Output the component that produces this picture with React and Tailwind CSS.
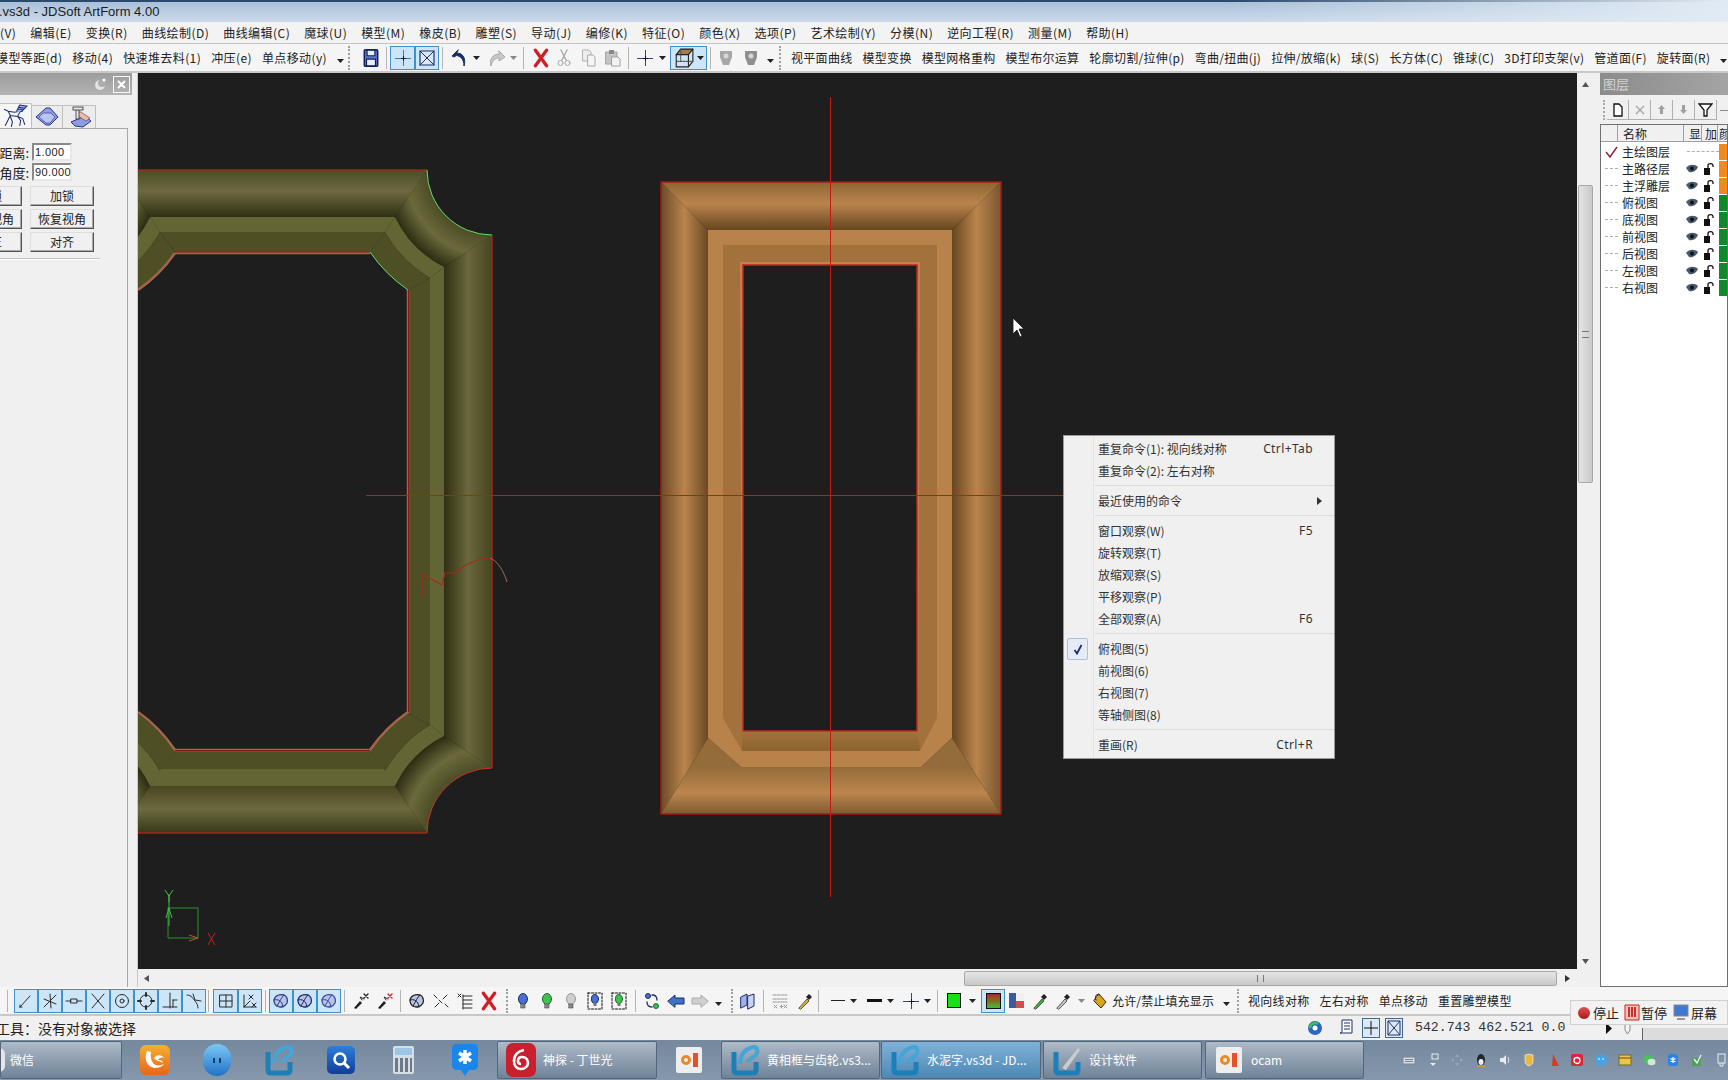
import React from "react";

const Ico = ({ s = 18, children }) => (
  <svg width={s} height={s} viewBox="0 0 18 18" fill="none" strokeLinecap="round" strokeLinejoin="round">
    {children}
  </svg>
);

const Cell = ({ className = "", children }) => (
  <div className={`flex h-full shrink-0 items-center justify-center ${className}`}>{children}</div>
);

const Sep = ({ className = "" }) => <div className={`h-[22px] w-px shrink-0 bg-[#b4b4b4] ${className}`} />;

const Grip = ({ className = "" }) => (
  <div className={`h-[24px] w-[3px] shrink-0 border-l-2 border-dotted border-[#a0a0a0] ${className}`} />
);

const Chev = ({ c = "#222" }) => (
  <svg width="7" height="4" viewBox="0 0 7 4">
    <path d="M0 0h7L3.5 4z" fill={c} />
  </svg>
);

const Low = () => (
  <svg width="7" height="10" viewBox="0 0 7 10">
    <path d="M0 6h7L3.5 10z" fill="#222" />
  </svg>
);

const HiBtn = ({ className = "w-[24px]", children }) => (
  <div className={`flex h-[24px] shrink-0 items-center justify-center border border-[#3e92c9] bg-[#cde6f7] ${className}`}>
    {children}
  </div>
);

// toolbar drawings
const Save = () => (
  <Ico s={20}>
    <rect x="3" y="1.5" width="12" height="15" rx="1" fill="#5b78c8" stroke="#14215e" strokeWidth="1.4" />
    <rect x="5.5" y="2" width="7" height="5" fill="#e9eefc" stroke="#14215e" />
    <rect x="5" y="10" width="8" height="6" fill="#e9eefc" stroke="#14215e" />
  </Ico>
);
const Cross = ({ c = "#3f62ac" }) => (
  <svg width="18" height="18" viewBox="0 0 18 18" fill="none">
    <path d="M9.500 1v16M1 9.500h16" stroke={c} strokeWidth=".9" />
    <path d="M7 9.500h5M9.500 7v5" stroke="#111" strokeWidth=".9" />
  </svg>
);
const BoxX = ({ c = "#1f2f6e" }) => (
  <Ico>
    <rect x="2" y="2" width="14" height="14" fill="#dbe9f7" stroke={c} strokeWidth="1.2" />
    <path d="M2 2l14 14M16 2L2 16" stroke={c} />
  </Ico>
);
const Undo = () => (
  <Ico>
    <path d="M7 1L1 7l2 1 2.5-1.500C9 7 13 10 13 17c2-6 0-13-7-13z" fill="#1b2f66" stroke="#1b2f66" />
  </Ico>
);
const Redo = () => (
  <Ico>
    <path d="M11 2l6 6-6 4V9C7 9 4 12 3 17 1 10 5 5 11 5z" fill="#c7c7c7" stroke="#a9a9a9" />
  </Ico>
);
const RedX = ({ s = 20 }) => (
  <Ico s={s}>
    <path d="M4 2l10 14M14 2L4 16" stroke="#cf2027" strokeWidth="3" />
  </Ico>
);
const Scissor = () => (
  <Ico>
    <path d="M6 1l5 10M12 1L7 11" stroke="#a8a8a8" strokeWidth="1.4" />
    <circle cx="5.500" cy="14" r="2.500" stroke="#a8a8a8" />
    <circle cx="12.500" cy="14" r="2.500" stroke="#a8a8a8" />
  </Ico>
);
const Copy = () => (
  <Ico>
    <path d="M3 1h6l2 2v9H3z" fill="#eee" stroke="#b0b0b0" />
    <path d="M8 6h5l2 2v9H8z" fill="#f5f5f5" stroke="#aaa" />
  </Ico>
);
const Paste = () => (
  <Ico>
    <rect x="2" y="3" width="11" height="12" fill="#c5c5c5" stroke="#a0a0a0" />
    <rect x="5" y="1" width="5" height="4" fill="#888" />
    <path d="M8 8h6l2 2v7H8z" fill="#f4f4f4" stroke="#a0a0a0" />
  </Ico>
);
const Cube = () => (
  <Ico s={20}>
    <path d="M6 1h11L13 6H2z" fill="#a8794c" stroke="#222" />
    <path d="M2 6v11h11V6M13 17l4-5V1" stroke="#222" />
    <path d="M6 1v11H2m4 0h11" stroke="#555" strokeDasharray="1.500 1" />
  </Ico>
);
const Shield = ({ c = "#a7a7a7" }) => (
  <Ico>
    <path d="M3 2h12v6l-3 8H6L3 8z" fill={c} />
    <circle cx="9" cy="7" r="2.500" fill="#d6d6d6" />
  </Ico>
);
const Snap = ({ d }) => (
  <Ico>
    <path d={d} stroke="#2a2a2a" strokeWidth="1" />
  </Ico>
);
const Ring = ({ inner }) => (
  <Ico>
    <circle cx="9" cy="9" r={inner ? 6.5 : 6} stroke="#2a2a2a" />
    {inner ? <circle cx="9" cy="9" r="2" stroke="#2a2a2a" /> : null}
    {!inner ? (
      <path d="M9 1v3M9 14v3M1 9h3M14 9h3" stroke="#2a2a2a" strokeWidth="2" />
    ) : null}
  </Ico>
);
const View = ({ c = "#2c3f8f" }) => (
  <Ico>
    <path d="M2 8C3 3 8 2 12 3C15 4 16 8 15 11C13 15 8 16 5 14C3 13 2 10 2 8z" fill="#b9c4e4" stroke={c} strokeWidth="1.300" />
    <path d="M2 8c4-1 8 0 9 7M12 3C9 6 8 9 5 14" stroke={c} />
  </Ico>
);
const Tool = ({ red }) => (
  <Ico>
    <path d="M2 16l6-7 2 2-6 6z" fill="#222" />
    <path d="M10 8l-2-3 4 2" stroke="#222" />
    <path d="M12 2l4 4M16 2l-4 4" stroke={red ? "#cf2027" : "#222"} strokeWidth="1.300" />
  </Ico>
);
const Bulb = ({ c, o }) => (
  <Ico>
    <ellipse cx="9" cy="7" rx="4.500" ry="5.500" fill={c} stroke={o} />
    <rect x="7" y="12" width="4" height="4" fill="#8a8a8a" stroke="#444" strokeWidth=".6" />
  </Ico>
);
const BulbBox = ({ c, o }) => (
  <Ico>
    <rect x="2" y="1" width="14" height="16" stroke="#111" strokeDasharray="2 1.500" />
    <ellipse cx="9" cy="7" rx="3.500" ry="4.500" fill={c} stroke={o} />
    <rect x="7.500" y="11" width="3" height="3" fill="#777" />
  </Ico>
);
const BlockArrow = ({ left }) => (
  <Ico>
    {left ? (
      <path d="M1 9l7-6v3h9v6H8v3z" fill="#3f72c4" stroke="#1b2f66" />
    ) : (
      <path d="M17 9l-7-6v3H1v6h9v3z" fill="#cfcfcf" stroke="#aaa" />
    )}
  </Ico>
);
const Dropper = ({ c = "#d9b23a" }) => (
  <Ico>
    <path d="M3 16l8-9 2 2-8 8z" fill={c} stroke="#333" strokeWidth=".8" />
    <path d="M10 5l3-3 3 3-3 3z" fill="#222" />
  </Ico>
);

const TitleBar = () => (
  <div className="relative h-[22px] shrink-0 overflow-hidden bg-gradient-to-b from-[#a5bdd8] to-[#cbdaea]">
    <div className="absolute inset-x-0 top-0 h-[2px] bg-[#2b4a6b]" />
    <div className="absolute inset-y-0 right-0 w-[500px] bg-gradient-to-r from-transparent to-[#e2ebf4]" />
    <div className="relative -ml-[40px] flex h-full items-center pt-[1px] text-[13px] text-[#1c1c1c] [font-family:'Liberation_Sans','Noto_Sans_CJK_SC',sans-serif]">
      水泥字.vs3d - JDSoft ArtForm 4.00
    </div>
  </div>
);

const menus = ["视图(V)", "编辑(E)", "变换(R)", "曲线绘制(D)", "曲线编辑(C)", "魔球(U)", "模型(M)", "橡皮(B)", "雕塑(S)", "导动(J)", "编修(K)", "特征(O)", "颜色(X)", "选项(P)", "艺术绘制(Y)", "分模(N)", "逆向工程(R)", "测量(M)", "帮助(H)"];

const MenuBar = () => (
  <div className="flex h-[22px] shrink-0 items-center gap-[14px] overflow-hidden border-b border-[#c4c4c4] bg-[#f3f3f3] pt-[1px] text-[12px] tracking-[0.45px] text-[#222]">
    <div className="-ml-[25px] shrink-0">{menus[0]}</div>
    {menus.slice(1).map((m) => (
      <div key={m} className="shrink-0">{m}</div>
    ))}
  </div>
);

const TopToolbar = () => (
  <div className="flex h-[29px] shrink-0 items-center overflow-hidden border-b-2 border-[#c8c8c8] bg-[#f5f5f5] text-[12px] tracking-[0.4px] text-[#222]">
    <div className="flex h-full w-[348px] shrink-0 items-center gap-[10px]">
      <span className="-ml-[4px] shrink-0">模型等距(d)</span>
      <span className="shrink-0">移动(4)</span>
      <span className="shrink-0">快速堆去料(1)</span>
      <span className="shrink-0">冲压(e)</span>
      <span className="shrink-0">单点移动(y)</span>
      <Low />
    </div>
    <Grip />
    <Cell className="ml-[9px] w-[22px]"><Save /></Cell>
    <Sep className="ml-[4px]" />
    <HiBtn className="ml-[3px] w-[25px]"><Cross /></HiBtn>
    <HiBtn className="w-[24px]"><BoxX /></HiBtn>
    <Sep className="ml-[3px]" />
    <Cell className="ml-[7px] w-[20px]"><Undo /></Cell>
    <Cell className="w-[12px]"><Chev /></Cell>
    <Cell className="ml-[5px] w-[20px]"><Redo /></Cell>
    <Cell className="w-[12px]"><Chev c="#888" /></Cell>
    <Sep className="ml-[4px]" />
    <Cell className="ml-[7px] w-[20px]"><RedX /></Cell>
    <Cell className="ml-[3px] w-[20px]"><Scissor /></Cell>
    <Cell className="ml-[5px] w-[20px]"><Copy /></Cell>
    <Cell className="ml-[4px] w-[20px]"><Paste /></Cell>
    <Sep className="ml-[5px]" />
    <Cell className="ml-[6px] w-[20px]"><Cross c="#2a2a6a" /></Cell>
    <Cell className="ml-[1px] w-[12px]"><Chev /></Cell>
    <HiBtn className="ml-[2px] w-[37px] gap-[3px]"><Cube /><Chev /></HiBtn>
    <Sep className="ml-[3px]" />
    <Cell className="ml-[5px] w-[20px]"><Shield /></Cell>
    <Cell className="ml-[5px] w-[20px]"><Shield c="#8f8f8f" /></Cell>
    <Cell className="ml-[3px] w-[12px]"><Low /></Cell>
    <Grip className="ml-[3px]" />
    <div className="ml-[9px] flex shrink-0 items-center gap-[10px] tracking-[0.3px]">
      {["视平面曲线", "模型变换", "模型网格重构", "模型布尔运算", "轮廓切割/拉伸(p)", "弯曲/扭曲(j)", "拉伸/放缩(k)", "球(S)", "长方体(C)", "锥球(C)", "3D打印支架(v)", "管道面(F)", "旋转面(R)"].map((t) => (
        <span key={t} className="shrink-0">{t}</span>
      ))}
      <Low />
    </div>
  </div>
);

const PanelBtn = ({ className = "", children }) => (
  <div className={`flex h-[20px] w-[64px] shrink-0 items-center justify-center border border-[#dedede] border-r-[#555] border-b-[#555] bg-[#f0f0f0] text-[12px] text-[#222] shadow-[inset_-1px_-1px_0_#a8a8a8] ${className}`}>
    {children}
  </div>
);

const NumField = ({ label, value }) => (
  <div className="flex h-[18px] items-center">
    <span className="-ml-[8px] w-[37px] shrink-0 text-right text-[13px] leading-none">{label}</span>
    <div className="ml-[3px] flex h-[18px] w-[40px] items-center border-2 border-[#8a8a8a] border-r-[#e8e8e8] border-b-[#e8e8e8] bg-white pl-[1px] text-[11px] tracking-[0.4px] text-[#222] [font-family:'Liberation_Sans',sans-serif]">
      {value}
    </div>
  </div>
);

const LeftPanel = () => (
  <div className="flex w-[138px] shrink-0 flex-col overflow-hidden border-r border-[#c8c8c8] bg-[#f0f0f0] text-[#222]">
    <div className="flex h-[22px] w-[132px] shrink-0 items-center justify-end gap-[6px] bg-gradient-to-b from-[#9c9c9c] to-[#b4b4b4] pr-[2px]">
      <svg width="14" height="14" viewBox="0 0 14 14">
        <circle cx="7" cy="8" r="5" fill="#e4e4e4" />
        <circle cx="9" cy="6" r="4" fill="#adadad" />
        <circle cx="11" cy="3" r="1.500" fill="#fff" />
      </svg>
      <div className="flex h-[17px] w-[17px] items-center justify-center border border-white/90 text-white">
        <svg width="9" height="9" viewBox="0 0 9 9">
          <path d="M1 1l7 7M8 1L1 8" stroke="#fff" strokeWidth="2" />
        </svg>
      </div>
    </div>
    <div className="mt-[10px] flex h-[23px] shrink-0 items-end">
      <div className="-ml-[1px] flex h-[25px] w-[33px] items-center justify-center rounded-t-[2px] border-x border-t border-[#c0c0c0] bg-[#f6f6f6]">
        <svg width="27" height="25" viewBox="0 0 26 24" fill="none" stroke="#1d2d78" strokeWidth="1">
          <path d="M2 5l4 2 6 1 5-1 3 0M6 7l2 4 7 1 2-4M8 11l-3 6-2 4M8 12l2 5-1 5M15 12l3 4-1 5M15 12l5 2 2 6" />
          <path d="M14 7l3-6 7 1-4 4-3 2" fill="#a9bcf0" />
          <path d="M16 3l6 1M15 5l5 0" />
        </svg>
      </div>
      <div className="flex h-[23px] w-[31px] items-center justify-center border-r border-t border-[#c0c0c0] bg-[#ececec]">
        <svg width="24" height="20" viewBox="0 0 24 20">
          <path d="M1 10L11 1h4l8 9-8 8h-4z" fill="#8d9de0" stroke="#2a3488" />
          <path d="M8 6h8l4 4-5 6h-4L4 10z" fill="#b9c4f0" stroke="#2a3488" strokeWidth=".6" />
        </svg>
      </div>
      <div className="flex h-[23px] w-[33px] items-center justify-center border-r border-t border-[#c0c0c0] bg-[#ececec] pl-[3px]">
        <svg width="24" height="22" viewBox="0 0 24 22">
          <path d="M2 16l14-6 6 5-8 6-8-1z" fill="#8d9de0" stroke="#2a3488" />
          <path d="M9 6h3l9 6-4 3-8-5z" fill="#ecb8ac" stroke="#444" strokeWidth=".6" />
          <rect x="7" y="2" width="3" height="11" fill="#e4e4e4" stroke="#333" strokeWidth=".8" />
          <rect x="4" y="1" width="10" height="3" fill="#e4e4e4" stroke="#333" strokeWidth=".8" />
        </svg>
      </div>
    </div>
    <div className="mr-[9px] flex flex-1 flex-col border-r border-t border-[#a8a8a8] bg-[#f0f0f0] pt-[14px]">
      <div className="flex flex-col gap-[2px]">
        <NumField label="距离:" value="1.000" />
        <NumField label="角度:" value="90.000" />
      </div>
      <div className="mt-[5px] flex flex-col gap-[3px]">
        <div className="-ml-[42px] flex gap-[8px]"><PanelBtn>解锁</PanelBtn><PanelBtn>加锁</PanelBtn></div>
        <div className="-ml-[42px] flex gap-[8px]"><PanelBtn>设置视角</PanelBtn><PanelBtn>恢复视角</PanelBtn></div>
        <div className="-ml-[42px] flex gap-[8px]"><PanelBtn>摆正</PanelBtn><PanelBtn>对齐</PanelBtn></div>
      </div>
      <div className="mt-[6px] h-[2px] w-[100px] border-y border-t-[#c4c4c4] border-b-white" />
    </div>
  </div>
);

const Frames = () => (
  <svg className="absolute inset-0" width="1439" height="896" viewBox="138 73 1439 896" fill="none">
    <defs>
      <linearGradient id="oTop" gradientUnits="userSpaceOnUse" x1="0" y1="170" x2="0" y2="217">
        <stop offset="0" stopColor="#4c4c26" />
        <stop offset=".45" stopColor="#6c6a3e" />
        <stop offset="1" stopColor="#2f2f14" />
      </linearGradient>
      <linearGradient id="oBot" gradientUnits="userSpaceOnUse" x1="0" y1="785" x2="0" y2="833">
        <stop offset="0" stopColor="#45451f" />
        <stop offset=".5" stopColor="#6c6a3e" />
        <stop offset="1" stopColor="#38381a" />
      </linearGradient>
      <linearGradient id="oRight" gradientUnits="userSpaceOnUse" x1="444" y1="0" x2="492" y2="0">
        <stop offset="0" stopColor="#2f2f14" />
        <stop offset=".5" stopColor="#6a683c" />
        <stop offset="1" stopColor="#45451f" />
      </linearGradient>
      <radialGradient id="oCorner" gradientUnits="userSpaceOnUse" cx="492" cy="170" r="108">
        <stop offset=".6" stopColor="#4c4c26" />
        <stop offset=".8" stopColor="#6b6a3c" />
        <stop offset="1" stopColor="#2c2c12" />
      </radialGradient>
      <linearGradient id="wTop" gradientUnits="userSpaceOnUse" x1="0" y1="182" x2="0" y2="230">
        <stop offset="0" stopColor="#8d6533" />
        <stop offset=".45" stopColor="#ba844c" />
        <stop offset="1" stopColor="#664620" />
      </linearGradient>
      <linearGradient id="wBot" gradientUnits="userSpaceOnUse" x1="0" y1="767" x2="0" y2="814">
        <stop offset="0" stopColor="#946c3a" />
        <stop offset=".55" stopColor="#bc864e" />
        <stop offset="1" stopColor="#7d5a30" />
      </linearGradient>
      <linearGradient id="wLeft" gradientUnits="userSpaceOnUse" x1="661" y1="0" x2="708" y2="0">
        <stop offset="0" stopColor="#6b4c26" />
        <stop offset=".5" stopColor="#ba844c" />
        <stop offset="1" stopColor="#6a4a24" />
      </linearGradient>
      <linearGradient id="wRight" gradientUnits="userSpaceOnUse" x1="952" y1="0" x2="1001" y2="0">
        <stop offset="0" stopColor="#664620" />
        <stop offset=".5" stopColor="#ba844c" />
        <stop offset="1" stopColor="#7a5630" />
      </linearGradient>
      <linearGradient id="wIn" gradientUnits="userSpaceOnUse" x1="0" y1="732" x2="0" y2="751">
        <stop offset="0" stopColor="#a3723c" />
        <stop offset="1" stopColor="#8b6330" />
      </linearGradient>
      <g id="oliveCorner">
        <path d="M427 170A65 65 0 0 0 492 235L444 267A108 108 0 0 1 395 217Z" fill="url(#oCorner)" />
        <path d="M395 217A108 108 0 0 0 444 267L430 278A124 124 0 0 1 385 232Z" fill="#646535" />
        <path d="M385 232A124 124 0 0 0 430 278L408 290A147 147 0 0 1 370 252Z" fill="#4f4f26" />
      </g>
    </defs>

    {/* olive frame, cut by the panel on its left */}
    <path d="M427 170L395 217H150L118 170Z" fill="url(#oTop)" />
    <path d="M395 217L385 232H160L150 217Z" fill="#646535" />
    <path d="M385 232L370 252H175L160 232Z" fill="#4f4f26" />
    <path d="M492 235L444 267V736L492 768Z" fill="url(#oRight)" />
    <path d="M444 267L430 278V725L444 736Z" fill="#646535" />
    <path d="M430 278L408 290V713L430 725Z" fill="#4f4f26" />
    <path d="M427 833L395 786H150L118 833Z" fill="url(#oBot)" />
    <path d="M395 786L385 769H160L150 786Z" fill="#646535" />
    <path d="M385 769L370 751H175L160 769Z" fill="#4f4f26" />
    <use href="#oliveCorner" />
    <use href="#oliveCorner" transform="translate(0 1003) scale(1 -1)" />
    <use href="#oliveCorner" transform="translate(545 0) scale(-1 1)" />
    <use href="#oliveCorner" transform="translate(545 1003) scale(-1 -1)" />
    <path d="M120 170H427M492 235V768M427 833H120" stroke="#a3241c" strokeWidth="1.500" />
    <path d="M427 170A65 65 0 0 0 492 235" stroke="#63df63" />
    <path d="M492 768A65 65 0 0 0 427 833" stroke="#c9372a" />
    <path d="M175 253H370M408 290V712A147 147 0 0 0 370 750H175A147 147 0 0 0 138 712M138 290A147 147 0 0 0 175 253" stroke="#a5644c" strokeWidth="2.500" />
    <path d="M175 252H370M408.500 290V712M370 750.500H175" stroke="#8a1710" />
    <path d="M370 252A147 147 0 0 0 408 290" stroke="#63df63" />
    <path d="M423 597V574L442 585L445 573H455C462 567 475 558 490 558" stroke="#a52a1a" strokeWidth="1.200" />
    <path d="M490 558C498 561 504 572 507 582" stroke="#9a6a60" />

    {/* brown frame */}
    <path d="M661 182H1001L952 230H708Z" fill="url(#wTop)" />
    <path d="M661 182L708 230V738L661 814Z" fill="url(#wLeft)" />
    <path d="M1001 182L952 230V738L1001 814Z" fill="url(#wRight)" />
    <path d="M661 814L708 738L741 767H921L952 738L1001 814Z" fill="url(#wBot)" />
    <path d="M708 230H952V738L921 767H741L708 738Z" fill="#b8824b" />
    <path d="M723 245H937V718L920 751H742L723 718Z" fill="#a3723c" />
    <path d="M742 732H918L920 751H742Z" fill="url(#wIn)" />
    <path d="M740 262H920L918 732H742Z" fill="#c77f52" />
    <rect x="743" y="265" width="174" height="466" fill="#1e1e1e" stroke="#b52a1a" strokeWidth="1.500" />
    <rect x="661" y="182" width="340" height="632" stroke="#a01c14" strokeWidth="1.500" />

    <path d="M366 495.500H1064M830.500 97V897" stroke="#c41a12" />

    {/* axes */}
    <path d="M168 908H198V938H168Z" stroke="#2f8f2f" />
    <path d="M169 894V926M166 918L169 908L172 918" stroke="#3fbf3f" />
    <path d="M189 935L198 938L189 941" stroke="#b8552a" />
    <path d="M165 890L169 896L173 890M169 896V902" stroke="#3fbf3f" />
    <path d="M208 933L215 945M215 933L208 945" stroke="#c52020" />

    {/* cursor */}
    <path d="M1013 318V334L1017 330L1020 337L1022 336L1019 329H1024Z" fill="#fff" stroke="#111" strokeWidth=".8" />
  </svg>
);

const menuRows = [
  [["重复命令(1): 视向线对称", "Ctrl+Tab"], ["重复命令(2): 左右对称", ""]],
  [["最近使用的命令", ">"]],
  [["窗口观察(W)", "F5"], ["旋转观察(T)", ""], ["放缩观察(S)", ""], ["平移观察(P)", ""], ["全部观察(A)", "F6"]],
  [["俯视图(5)", "", true], ["前视图(6)", ""], ["右视图(7)", ""], ["等轴侧图(8)", ""]],
  [["重画(R)", "Ctrl+R"]],
];

const ContextMenu = () => (
  <div className="absolute left-[926px] top-[363px] flex w-[270px] flex-col bg-[#f0f0f0] py-[2px] text-[12px] text-[#333] shadow-[0_0_0_1px_#9a9a9a]">
    <div className="absolute inset-y-0 left-[29px] w-px bg-[#e2e2e2]" />
    {menuRows.map((group, gi) => (
      <div key={gi}>
        {gi > 0 ? <div className="ml-[31px] mt-[3px] mb-[4px] h-px bg-[#dcdcdc]" /> : null}
        {group.map(([label, right, checked]) => (
          <div key={label} className="relative flex h-[22px] items-center pl-[34px] pr-[21px]">
            {checked ? (
              <div className="absolute left-[3px] top-0 flex h-[22px] w-[21px] items-center justify-center rounded-[2px] border border-[#aebfdc] bg-[#e6ecf6]">
                <svg width="10" height="11" viewBox="0 0 10 11">
                  <path d="M1.500 6L4 9.500L8.500 1" fill="none" stroke="#1b2a78" strokeWidth="1.800" />
                </svg>
              </div>
            ) : null}
            <span className="flex-1">{label}</span>
            {right === ">" ? (
              <svg className="-mr-[9px]" width="5" height="8" viewBox="0 0 5 8">
                <path d="M0 0l5 4-5 4z" fill="#333" />
              </svg>
            ) : (
              <span className="tracking-[0.4px] [font-family:'Noto_Sans',sans-serif]">{right}</span>
            )}
          </div>
        ))}
      </div>
    ))}
  </div>
);

const Center = () => (
  <div className="flex min-w-0 flex-1 flex-col">
    <div className="flex min-h-0 flex-1">
      <div className="relative flex-1 overflow-hidden bg-[#1e1e1e]">
        <Frames />
        <ContextMenu />
      </div>
      <div className="flex w-[20px] shrink-0 flex-col items-center bg-[#f0f0f0] pr-[3px]">
        <svg className="mt-[9px]" width="7" height="5" viewBox="0 0 7 5"><path d="M0 5h7L3.500 0z" fill="#555" /></svg>
        <div className="mt-[98px] flex h-[298px] w-[15px] items-center justify-center rounded-[2px] border border-[#a8a8a8] bg-gradient-to-r from-[#e4e4e4] to-[#cacaca]">
          <div className="h-[7px] w-[7px] border-y border-[#777]" />
        </div>
        <svg className="mt-[476px]" width="7" height="5" viewBox="0 0 7 5"><path d="M0 0h7L3.500 5z" fill="#555" /></svg>
      </div>
    </div>
    <div className="flex h-[18px] shrink-0 items-center bg-[#f0f0f0]">
      <svg className="ml-[6px]" width="5" height="7" viewBox="0 0 5 7"><path d="M5 0v7L0 3.500z" fill="#555" /></svg>
      <div className="ml-[815px] flex h-[15px] w-[593px] items-center justify-center rounded-[2px] border border-[#a8a8a8] bg-gradient-to-b from-[#e6e6e6] to-[#c8c8c8]">
        <div className="h-[7px] w-[7px] border-x border-[#777]" />
      </div>
      <svg className="ml-[8px]" width="5" height="7" viewBox="0 0 5 7"><path d="M0 0v7l5-3.500z" fill="#333" /></svg>
    </div>
  </div>
);

const layers = [
  ["主绘图层", "#f28a1e", true],
  ["主路径层", "#f28a1e"],
  ["主浮雕层", "#f28a1e"],
  ["俯视图", "#12882c"],
  ["底视图", "#12882c"],
  ["前视图", "#12882c"],
  ["后视图", "#12882c"],
  ["左视图", "#12882c"],
  ["右视图", "#12882c"],
];

const LayerTool = ({ children }) => (
  <div className="flex h-[20px] w-[22px] shrink-0 items-center justify-center border-r border-b border-[#b0b0b0]">{children}</div>
);

const RightPanel = () => (
  <div className="ml-[3px] flex w-[128px] shrink-0 flex-col overflow-hidden bg-[#f0f0f0] text-[12px] text-[#222]">
    <div className="flex h-[22px] shrink-0 items-center bg-gradient-to-r from-[#8c8c8c] to-[#a4a4a4] pl-[3px] text-[13px] text-[#d2d2d2]">图层</div>
    <div className="mt-[5px] flex h-[20px] shrink-0 items-center pl-[3px]">
      <div className="mr-[1px] h-[20px] w-[3px] border-l-2 border-dotted border-[#a8a8a8]" />
      <LayerTool>
        <svg width="12" height="14" viewBox="0 0 12 14"><path d="M2 1h5l3 3v9H2z" fill="#fff" stroke="#111" strokeWidth="1.300" /></svg>
      </LayerTool>
      <LayerTool>
        <svg width="10" height="10" viewBox="0 0 10 10"><path d="M1 1l8 8M9 1L1 9" stroke="#a8a8a8" strokeWidth="1.400" /></svg>
      </LayerTool>
      <LayerTool>
        <svg width="9" height="11" viewBox="0 0 9 11"><path d="M4.500 1L8 5H6v5H3V5H1z" fill="#a0a0a0" /></svg>
      </LayerTool>
      <LayerTool>
        <svg width="9" height="11" viewBox="0 0 9 11"><path d="M4.500 10L8 6H6V1H3v5H1z" fill="#a0a0a0" /></svg>
      </LayerTool>
      <LayerTool>
        <svg width="15" height="14" viewBox="0 0 15 14"><path d="M1 1h13L9 7v6H6V7z" fill="#fff" stroke="#111" strokeWidth="1.300" /></svg>
      </LayerTool>
      <div className="ml-[3px] h-px w-[8px] bg-[#888]" />
    </div>
    <div className="mt-[4px] flex flex-1 flex-col border border-[#707070] bg-white">
      <div className="flex h-[17px] shrink-0 bg-[#f0f0f0] leading-[17px]">
        <div className="w-[17px] shrink-0 border-r border-b border-[#a0a0a0]" />
        <div className="w-[66px] shrink-0 border-r border-b border-[#a0a0a0] pl-[5px]">名称</div>
        <div className="w-[18px] shrink-0 overflow-hidden border-r border-b border-[#a0a0a0] pl-[5px]">显</div>
        <div className="w-[16px] shrink-0 overflow-hidden border-r border-b border-[#a0a0a0] pl-[3px]">加</div>
        <div className="flex-1 overflow-hidden border-b border-[#a0a0a0] pl-[1px]">颜色</div>
      </div>
      <div className="flex flex-col pt-[1px]">
        {layers.map(([name, color, current]) => (
          <div key={name} className="flex h-[17px] items-center leading-none">
            <div className="flex w-[21px] shrink-0 items-center justify-center">
              {current ? (
                <svg width="13" height="12" viewBox="0 0 13 12"><path d="M1 6l4 5 7-10" fill="none" stroke="#8c2030" strokeWidth="1.400" /></svg>
              ) : (
                <div className="h-px w-[13px] border-t border-dashed border-[#b0b0b0]" />
              )}
            </div>
            <div className="w-[63px] shrink-0">{name}</div>
            {current ? (
              <div className="ml-[2px] h-px w-[32px] border-t border-dashed border-[#b0b0b0]" />
            ) : (
              <div className="flex w-[34px] shrink-0 items-center gap-[5px] pl-[1px]">
                <svg width="12" height="10" viewBox="0 0 12 10">
                  <path d="M0 4C3 0 9 0 12 3C10 8 4 9 3 8z" fill="#4a5a6e" />
                  <circle cx="6" cy="4.500" r="2" fill="#111" />
                </svg>
                <svg width="12" height="12" viewBox="0 0 12 12">
                  <rect x="1" y="5" width="6" height="7" fill="#111" />
                  <path d="M5 5V2.500C5 0 10 0 10 2.500V4" fill="none" stroke="#111" strokeWidth="1.300" />
                </svg>
              </div>
            )}
            <div className={`ml-auto h-[16px] w-[8px] shrink-0 ${color === "#f28a1e" ? "bg-[#f28a1e]" : "bg-[#12882c]"}`} />
          </div>
        ))}
      </div>
    </div>
  </div>
);

const BottomToolbar = () => (
  <div className="flex h-[29px] shrink-0 items-center overflow-hidden border-b-2 border-[#c8c8c8] bg-[#f5f5f5] text-[12px] tracking-[0.3px] text-[#222]">
    <Sep className="ml-[7px]" />
    <div className="ml-[6px] flex shrink-0">
      <HiBtn><Snap d="M3 15L13 4M3 15h2M3 15v-2" /></HiBtn>
      <HiBtn><Snap d="M3 15L15 3M9 2l1 14M3 7l12 5" /></HiBtn>
      <HiBtn><Snap d="M1 9h5M12 9h5M6 7h6v4H6z" /></HiBtn>
      <HiBtn><Snap d="M3 2l12 14M15 2L3 16" /></HiBtn>
      <HiBtn><Ring inner /></HiBtn>
      <HiBtn><Ring /></HiBtn>
      <HiBtn><Snap d="M9 1v15M2 15h14M12 8v7M12 8h4" /></HiBtn>
      <HiBtn><Snap d="M2 3c5 0 6 4 8 6s3 5 3 7M8 2l2 6 6 1" /></HiBtn>
    </div>
    <Sep className="ml-[2px]" />
    <div className="ml-[4px] flex shrink-0">
      <HiBtn className="w-[25px]"><Snap d="M3 3h12v12H3zM9 3v12M3 9h12" /></HiBtn>
      <HiBtn><Snap d="M3 15V3M3 15h12M3 15l6-6M8 3l4 4M12 3L8 7M11 11l4 4M15 11l-4 4" /></HiBtn>
    </div>
    <Sep className="ml-[3px]" />
    <div className="ml-[3px] flex shrink-0">
      <HiBtn><View /></HiBtn>
      <HiBtn><View c="#1e2c70" /></HiBtn>
      <HiBtn><View c="#3a4ca6" /></HiBtn>
    </div>
    <Sep className="ml-[3px]" />
    <Cell className="ml-[6px] w-[20px]"><Tool /></Cell>
    <Cell className="ml-[4px] w-[20px]"><Tool red /></Cell>
    <Sep className="ml-[5px]" />
    <Cell className="ml-[6px] w-[20px]"><View c="#222" /></Cell>
    <Cell className="ml-[4px] w-[20px]"><Snap d="M3 15l4-4M11 7l4-4M7 8l3 3M2 3l3 3M13 12l3 3" /></Cell>
    <Cell className="ml-[4px] w-[20px]"><Snap d="M7 4h9M7 8h9M7 12h9M7 16h9M7 3v14M2 2l3 3M5 2L2 5" /></Cell>
    <Cell className="ml-[4px] w-[20px]"><RedX /></Cell>
    <Grip className="ml-[7px]" />
    <Cell className="ml-[4px] w-[20px]"><Bulb c="#4a6fd0" o="#1b2f66" /></Cell>
    <Cell className="ml-[4px] w-[20px]"><Bulb c="#3fc24f" o="#1b6a2a" /></Cell>
    <Cell className="ml-[4px] w-[20px]"><Bulb c="#cfcfcf" o="#999" /></Cell>
    <Cell className="ml-[4px] w-[20px]"><BulbBox c="#4a6fd0" o="#1b2f66" /></Cell>
    <Cell className="ml-[4px] w-[20px]"><BulbBox c="#3fc24f" o="#1b6a2a" /></Cell>
    <Sep className="ml-[6px]" />
    <Cell className="ml-[6px] w-[20px]">
      <Ico>
        <circle cx="5" cy="4" r="2.500" fill="#4a6fd0" stroke="#1b2f66" />
        <circle cx="13" cy="14" r="2.500" fill="#3fc24f" stroke="#1b6a2a" />
        <path d="M9 3c3 0 5 2 5 5M9 15c-3 0-5-2-5-5" stroke="#1b2f66" strokeWidth="1.300" />
      </Ico>
    </Cell>
    <Cell className="ml-[4px] w-[20px]"><BlockArrow left /></Cell>
    <Cell className="ml-[4px] w-[20px]"><BlockArrow /></Cell>
    <Cell className="ml-[2px] w-[12px]"><Low /></Cell>
    <Grip className="ml-[7px]" />
    <Cell className="ml-[4px] w-[20px]">
      <Ico>
        <path d="M2 5l6-3v11l-6 3z" fill="#9fb3e8" stroke="#1b2f66" />
        <path d="M9 4l6-2v12l-6 3z" fill="#c7d3f2" stroke="#1b2f66" />
      </Ico>
    </Cell>
    <Sep className="ml-[5px]" />
    <Cell className="ml-[6px] w-[20px]">
      <Ico>
        <path d="M2 3h14M2 7h14M2 10h14" stroke="#999" strokeDasharray="3 1" />
        <path d="M3 13l3 3M6 13l-3 3M9 14.500h3M10.500 13v3M13 13l3 3M16 13l-3 3" stroke="#999" />
      </Ico>
    </Cell>
    <Cell className="ml-[5px] w-[20px]"><Dropper /></Cell>
    <Sep className="ml-[3px]" />
    <Cell className="ml-[9px] w-[20px]"><div className="h-px w-[14px] bg-[#222]" /></Cell>
    <Cell className="w-[10px]"><Chev /></Cell>
    <Cell className="ml-[6px] w-[20px]"><div className="h-[3px] w-[15px] bg-[#111]" /></Cell>
    <Cell className="w-[12px]"><Chev /></Cell>
    <Cell className="ml-[5px] w-[20px]"><Cross c="#1f2f80" /></Cell>
    <Cell className="w-[12px]"><Chev /></Cell>
    <Sep className="ml-[4px]" />
    <Cell className="ml-[6px] w-[20px]"><div className="h-[15px] w-[14px] border border-[#111] bg-[#19e019]" /></Cell>
    <Cell className="ml-[2px] w-[12px]"><Chev /></Cell>
    <HiBtn className="ml-[3px] w-[24px]">
      <div className="h-[16px] w-[15px] border border-[#111] bg-gradient-to-b from-[#b8142a] via-[#7a6a20] to-[#22c03a]" />
    </HiBtn>
    <Cell className="ml-[1px] w-[20px]">
      <div className="grid h-[15px] w-[15px] grid-cols-2 grid-rows-2">
        <div className="bg-[#3a5a9a]" /><div className="bg-[#f0f0f0]" />
        <div className="bg-[#3a5a9a]" /><div className="bg-[#d05050]" />
      </div>
    </Cell>
    <Cell className="ml-[4px] w-[20px]"><Dropper c="#3fb23f" /></Cell>
    <Cell className="ml-[3px] w-[20px]"><Dropper c="#c8c8c8" /></Cell>
    <Cell className="ml-[2px] w-[12px]"><Chev c="#888" /></Cell>
    <Cell className="ml-[3px] w-[20px]">
      <Ico>
        <path d="M8 2l7 8-5 6-7-7z" fill="#d9a520" stroke="#3a2a10" />
        <path d="M5 8C3 4 6 1 8 3" stroke="#222" />
      </Ico>
    </Cell>
    <span className="ml-[2px] w-[108px] shrink-0 tracking-[0.15px]">允许/禁止填充显示</span>
    <Cell className="w-[12px]"><Low /></Cell>
    <Grip className="ml-[5px]" />
    <div className="ml-[8px] flex shrink-0 items-center gap-[10px]">
      <span>视向线对称</span>
      <span>左右对称</span>
      <span>单点移动</span>
      <span>重置雕塑模型</span>
    </div>
  </div>
);

const StatusBar = () => (
  <div className="flex h-[24px] shrink-0 items-center overflow-hidden bg-[#f0f0f0] text-[#222]">
    <span className="-ml-[4px] w-[1311px] shrink-0 text-[14px]">工具：没有对象被选择</span>
    <svg width="16" height="16" viewBox="0 0 16 16">
      <circle cx="8" cy="8" r="7" fill="#2a66c4" />
      <path d="M3 8a5 5 0 0 1 8-4" fill="none" stroke="#3fc24f" strokeWidth="2.500" />
      <circle cx="8" cy="8" r="2.500" fill="#fff" />
    </svg>
    <svg className="ml-[15px]" width="16" height="18" viewBox="0 0 16 18">
      <path d="M4 1h10v13H2c2 0 2-1 2-3z" fill="#fff" stroke="#1b2f66" />
      <path d="M6 4h6M6 7h6M6 10h6" stroke="#1b2f66" />
    </svg>
    <div className="ml-[8px] flex h-[20px] w-[18px] items-center justify-center border border-[#3e6a90] bg-[#dbe9f7]">
      <svg width="14" height="14" viewBox="0 0 14 14"><path d="M7 0v14M0 7h14" stroke="#111" /></svg>
    </div>
    <div className="ml-[5px] flex h-[20px] w-[18px] items-center justify-center border border-[#3e6a90] bg-[#dbe9f7]">
      <svg width="14" height="16" viewBox="0 0 14 16"><path d="M1 1h12v14H1zM1 1l12 14M13 1L1 15" fill="none" stroke="#1f2f6e" /></svg>
    </div>
    <span className="ml-[12px] w-[191px] shrink-0 text-[13.200px] text-[#333] [font-family:'Liberation_Mono',monospace]">542.743 462.521 0.0</span>
    <svg width="6" height="11" viewBox="0 0 6 11"><path d="M0 0l6 5.500L0 11z" fill="#111" /></svg>
    <svg className="ml-[12px]" width="7" height="13" viewBox="0 0 7 13"><path d="M1 1h5v7L3.500 12 1 8z" fill="#f4f4f4" stroke="#8a8a8a" /></svg>
    <div className="ml-[11px] mt-[12px] h-[12px] flex-1 border-l border-[#666] bg-[#dcdcdc]" />
  </div>
);

const FloatBar = () => (
  <div className="absolute right-0 top-[1000px] flex h-[25px] w-[158px] items-center overflow-hidden border border-[#d0d0d0] bg-[#f2f2f2] text-[13px] text-[#222]">
    <div className="ml-[7px] h-[12px] w-[12px] shrink-0 rounded-full bg-gradient-to-b from-[#e05050] to-[#a81414]" />
    <span className="ml-[3px] shrink-0">停止</span>
    <svg className="ml-[5px] shrink-0" width="16" height="17" viewBox="0 0 16 17">
      <path d="M1 1h14v15H1z" fill="#f4c4b4" stroke="#c82020" />
      <path d="M5 3v10M8 3v10M11 3v10" stroke="#c82020" strokeWidth="1.800" />
    </svg>
    <span className="ml-[1px] shrink-0">暂停</span>
    <svg className="ml-[6px] shrink-0" width="16" height="17" viewBox="0 0 16 17">
      <rect x="1" y="1" width="14" height="11" fill="#3f78d0" stroke="#888" />
      <path d="M4 15h8" stroke="#999" strokeWidth="2" />
    </svg>
    <span className="ml-[2px] shrink-0">屏幕</span>
  </div>
);

const TaskBtn = ({ className = "", active, icon, label }) => (
  <div className={`flex h-[38px] shrink-0 items-center overflow-hidden rounded-[2px] border border-[#55667a] ${active ? "bg-gradient-to-b from-[#7fb2d8] to-[#4d87b4]" : "bg-gradient-to-b from-[#aebac8] to-[#6f8398]"} text-[12px] text-white ${className}`}>
    <div className="flex w-[45px] shrink-0 justify-center">{icon}</div>
    <span className="truncate">{label}</span>
  </div>
);

const ArtIcon = () => (
  <svg width="30" height="32" viewBox="0 0 30 32">
    <path d="M4 8v18c0 2 1 3 3 3h16c2 0 3-1 3-3v-8" fill="none" stroke="#1c7fb8" strokeWidth="5" />
    <path d="M10 20c0-10 6-16 14-17 3 0 4 3 3 6-2 5-8 5-9 9" fill="none" stroke="#45a4d8" strokeWidth="4" />
  </svg>
);
const DesignIcon = () => (
  <svg width="30" height="32" viewBox="0 0 30 32">
    <path d="M4 8v18c0 2 1 3 3 3h16c2 0 3-1 3-3v-8" fill="none" stroke="#1c7fb8" strokeWidth="5" />
    <path d="M10 24L26 4l2 2-14 20z" fill="#c8ccd0" />
  </svg>
);
const Ocam = () => (
  <div className="flex h-[26px] w-[26px] items-center justify-center gap-[2px] rounded-[2px] bg-[#eee]">
    <div className="h-[10px] w-[10px] rounded-full border-[3px] border-[#e88a2a]" />
    <div className="h-[14px] w-[5px] bg-[#e8502a]" />
  </div>
);

const trayIcons = [
  <g key="kbd"><rect x="1" y="4" width="12" height="7" fill="#d5dbe0" stroke="#7a8896" /><path d="M3 6.500h8M3 8.500h8" stroke="#7a8896" /></g>,
  <g key="up"><rect x="6" y="1" width="6" height="5" fill="none" stroke="#e8edf2" /><path d="M4 10h6l-3 3z" fill="#e8edf2" /></g>,
  <path key="net" d="M7 1l2 3H5zM7 13l2-3H5zM1 7l3-2v4zM13 7l-3-2v4z" fill="#9aa8b6" />,
  <g key="qq"><ellipse cx="7" cy="7" rx="4" ry="6" fill="#20262c" /><ellipse cx="7" cy="9" rx="2.500" ry="3" fill="#e8edf2" /><path d="M3 13h8" stroke="#d8a020" strokeWidth="1.500" /></g>,
  <g key="vol"><path d="M2 5h3l3-3v10L5 9H2z" fill="#e8edf2" /><path d="M10 4c1 2 1 4 0 6" fill="none" stroke="#e8edf2" /></g>,
  <path key="shield" d="M3 2l4-1 4 1v6c0 3-2 4-4 5-2-1-4-2-4-5z" fill="#e8b83a" stroke="#fff" strokeWidth=".6" />,
  <path key="tri" d="M7 1l6 12H6z" fill="#d83a2a" />,
  <g key="music"><rect x="1" y="1" width="12" height="12" rx="2" fill="#d8283a" /><circle cx="7" cy="7.500" r="3" fill="none" stroke="#fff" strokeWidth="1.300" /></g>,
  <g key="bird"><circle cx="7" cy="7" r="6" fill="#45a4e8" /><path d="M5 5v2M9 5v2" stroke="#fff" /></g>,
  <g key="win"><rect x="1" y="2" width="12" height="10" fill="#e8c84a" stroke="#7a6a20" /><path d="M1 5h12" stroke="#7a3a20" /></g>,
  <g key="wx"><ellipse cx="6" cy="6" rx="5" ry="4" fill="#4ac25a" /><ellipse cx="9.500" cy="9" rx="4" ry="3.200" fill="#d0e8d4" /></g>,
  <g key="star"><rect x="2" y="1" width="10" height="12" rx="3" fill="#2a84e8" /><path d="M7 4v6M4.500 5.500l5 3M9.500 5.500l-5 3" stroke="#fff" strokeWidth="1.200" /></g>,
  <g key="sec"><path d="M2 5h9v8H2z" fill="#5a9a5a" /><path d="M4 6l3 4 4-8" fill="none" stroke="#dfe" strokeWidth="1.300" /></g>,
  <g key="dev"><rect x="4" y="1" width="7" height="9" fill="none" stroke="#e8edf2" /><path d="M6 10v3h3v-3" fill="none" stroke="#e8edf2" /></g>,
];

const Taskbar = () => (
  <div className="flex h-[40px] shrink-0 items-center overflow-hidden bg-gradient-to-b from-[#74889e] to-[#8698ac]">
    <div className="flex h-[38px] w-[122px] shrink-0 items-center overflow-hidden rounded-[2px] border border-[#55667a] bg-gradient-to-b from-[#aebac8] to-[#6f8398] text-[12px] text-white">
      <div className="-ml-[8px] h-[24px] w-[12px] shrink-0 rounded-full bg-[#e6e6e6]" />
      <span className="ml-[5px]">微信</span>
    </div>
    <Cell className="ml-[2px] w-[62px]">
      <svg width="32" height="32" viewBox="0 0 32 32">
        <defs>
          <linearGradient id="ucBg" x1="0" y1="0" x2="0" y2="1">
            <stop offset="0" stopColor="#f6b030" />
            <stop offset="1" stopColor="#e8641c" />
          </linearGradient>
        </defs>
        <rect x="1" y="1" width="30" height="30" rx="6" fill="url(#ucBg)" />
        <path d="M8 7c-3 7-1 15 7 17 4 0 8-1 10-4-4 2-9 2-11-1-2-3-3-7-2-11z" fill="#fff" />
        <path d="M15 14c3-4 8-3 10 0-3-1-5 0-6 2 3 0 5 1 5 3-3-2-7-2-9-5z" fill="#fff" />
      </svg>
    </Cell>
    <Cell className="w-[62px]">
      <div className="flex h-[32px] w-[28px] items-center justify-center gap-[4px] rounded-full bg-gradient-to-b from-[#7cc8f4] to-[#1e72c8]">
        <div className="h-[5px] w-[2px] bg-[#123a6a]" /><div className="h-[5px] w-[2px] bg-[#123a6a]" />
      </div>
    </Cell>
    <Cell className="w-[62px]"><ArtIcon /></Cell>
    <Cell className="w-[62px]">
      <div className="flex h-[28px] w-[28px] items-center justify-center rounded-[5px] bg-gradient-to-b from-[#2f7fd8] to-[#123c9a]">
        <svg width="20" height="20" viewBox="0 0 20 20"><circle cx="9" cy="9" r="5.500" fill="none" stroke="#fff" strokeWidth="2.500" /><path d="M13 13l5 5" stroke="#fff" strokeWidth="3" /></svg>
      </div>
    </Cell>
    <Cell className="w-[62px]">
      <div className="flex h-[28px] w-[21px] flex-col gap-[3px] rounded-[2px] bg-[#d8dde2] p-[2px]">
        <div className="h-[7px] bg-[#9cc8e8]" />
        <div className="flex-1 bg-[repeating-linear-gradient(90deg,#6a7a8a_0_3px,#d8dde2_3px_5px)]" />
      </div>
    </Cell>
    <Cell className="w-[62px]">
      <svg width="28" height="34" viewBox="0 0 28 34">
        <path d="M6 1h16c3 0 5 2 5 5v16c0 3-2 5-5 5h-4l-4 6-4-6H6c-3 0-5-2-5-5V6c0-3 2-5 5-5z" fill="#1b86ea" />
        <path d="M14 7v14M8 10l12 8M20 10L8 18" stroke="#fff" strokeWidth="3.500" />
      </svg>
    </Cell>
    <TaskBtn
      className="ml-[1px] w-[160px]"
      label="神探 - 丁世光"
      icon={
        <svg width="32" height="36" viewBox="0 0 32 36">
          <rect x="1" y="1" width="30" height="34" rx="7" fill="#c8202e" />
          <path d="M19 8c-6 1-10 5-10 11 0 5 3 8 7 8s7-3 7-6-2-6-6-6c-3 0-4 2-4 4s1 3 3 3" fill="none" stroke="#fff" strokeWidth="2.600" />
        </svg>
      }
    />
    <Cell className="w-[64px]"><Ocam /></Cell>
    <TaskBtn className="w-[159px]" label="黄相框与齿轮.vs3..." icon={<ArtIcon />} />
    <TaskBtn className="ml-[1px] w-[160px]" active label="水泥字.vs3d - JD..." icon={<ArtIcon />} />
    <TaskBtn className="ml-[2px] w-[159px]" label="设计软件" icon={<DesignIcon />} />
    <TaskBtn className="ml-[3px] w-[159px]" label="ocam" icon={<Ocam />} />
    <div className="ml-[33px] flex shrink-0">
      {trayIcons.map((icon) => (
        <div key={icon.key} className="flex w-[24px] justify-center">
          <svg width="14" height="14" viewBox="0 0 14 14">{icon}</svg>
        </div>
      ))}
    </div>
  </div>
);

export default function App() {
  return (
    <div className="relative flex h-[1080px] w-[1728px] flex-col overflow-hidden bg-[#f0f0f0] [font-family:'Noto_Sans_CJK_SC','Noto_Sans',sans-serif]">
      <TitleBar />
      <MenuBar />
      <TopToolbar />
      <div className="flex min-h-0 flex-1">
        <LeftPanel />
        <Center />
        <RightPanel />
      </div>
      <BottomToolbar />
      <StatusBar />
      <Taskbar />
      <FloatBar />
    </div>
  );
}
